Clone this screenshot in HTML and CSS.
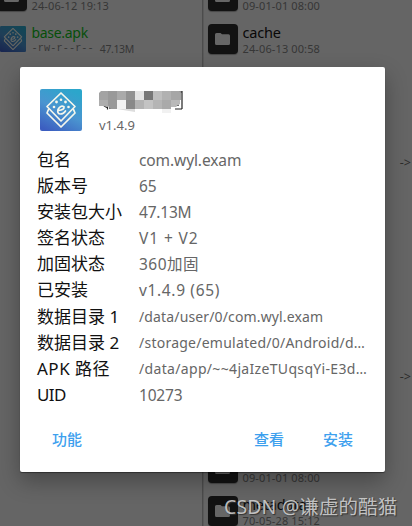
FILE: index.html
```html
<!DOCTYPE html>
<html lang="zh-CN">
<head>
    <meta charset="UTF-8">
    <meta name="viewport" content="width=device-width, initial-scale=1.0">
    <title>base.apk</title>
    <link rel="stylesheet" href="styles.css">
</head>
<body>
    <svg width="0" height="0" class="defs">
        <defs>
            <linearGradient id="app-bg" x1="0.7" y1="0" x2="0.2" y2="1">
                <stop offset="0" stop-color="#2ca6cb"/>
                <stop offset="0.5" stop-color="#4a95d0"/>
                <stop offset="1" stop-color="#3c5ec0"/>
            </linearGradient>
        </defs>
        <symbol id="folder" viewBox="0 0 30 30">
            <path d="M7 10.500Q7 9 8.500 9H12.500L14 10.300H20.500Q22 10.300 22 11.800V19.500Q22 21 20.500 21H8.500Q7 21 7 19.500Z" fill="#666"/>
        </symbol>
        <symbol id="app" viewBox="0 0 42 42">
            <rect width="42" height="42" rx="2" fill="url(#app-bg)"/>
            <g fill="none" stroke="#f6f7ec" stroke-width="1.700" stroke-linejoin="round" stroke-linecap="round">
                <path d="M21 4L35 17.500L21 32L7 17.500Z"/>
                <path d="M8.500 20.500L7 24L21 38L35 24L33.500 20.500"/>
                <path d="M18.500 21.500Q24.500 21 24 17.800Q20.500 15.800 18 20.500Q17 25 20.500 25Q23.500 25 25.500 22"/>
            </g>
            <g fill="#f6f7ec">
                <circle cx="14" cy="18" r="1.300"/>
                <circle cx="16.500" cy="13" r="1.400"/>
                <circle cx="21" cy="10.800" r="1.300"/>
                <circle cx="25.500" cy="13" r="1.400"/>
                <circle cx="28.500" cy="18" r="1.300"/>
            </g>
        </symbol>
    </svg>

    <div class="screen">
        <div class="pane pane-left">
            <div class="file">
                <div class="icon"><svg><use href="#folder"/></svg></div>
                <div class="info"><p class="name"></p><p class="meta">24-06-12 19:13</p></div>
            </div>
            <div class="file">
                <svg class="apk-icon"><use href="#app"/></svg>
                <div class="info"><p class="name apk">base.apk</p><p class="meta"><span class="perm">-rw-r--r--</span><span class="weight">47.13M</span></p></div>
            </div>
        </div>
        <div class="pane pane-right">
            <div class="file">
                <div class="icon"><svg><use href="#folder"/></svg></div>
                <div class="info"><p class="name"></p><p class="meta">09-01-01 08:00</p></div>
            </div>
            <div class="file">
                <div class="icon"><svg><use href="#folder"/></svg></div>
                <div class="info"><p class="name">cache</p><p class="meta">24-06-13 00:58</p></div>
            </div>
            <div class="file"></div>
            <div class="file"></div>
            <div class="file"><span class="link">-&gt;</span></div>
            <div class="file"></div>
            <div class="file"></div>
            <div class="file"></div>
            <div class="file"></div>
            <div class="file"><span class="link">-&gt;</span></div>
            <div class="file"></div>
            <div class="file">
                <div class="icon"><svg><use href="#folder"/></svg></div>
                <div class="info"><p class="name"></p><p class="meta">09-01-01 08:00</p></div>
            </div>
            <div class="file">
                <div class="icon"><svg><use href="#folder"/></svg></div>
                <div class="info"><p class="name">metadata</p><p class="meta">70-05-28 15:12</p></div>
            </div>
        </div>

        <div class="dialog">
            <div class="head">
                <svg class="app-icon"><use href="#app"/></svg>
                <div class="title">
                    <svg class="mosaic" width="84" height="23" viewBox="0 0 84 23">
                        <path d="M5 15L9 17M8.500 15V18.500M11 15V18M76 18H83M83 0V18M80 1H83M76 15L80 14" stroke="#222" stroke-width="1.200"/>
                        <path d="M18 18L36 21V18Z" fill="#ddd"/>
                        <path d="M0 2L2 0H9V9H0Z" fill="#a3a3a3"/>
                        <rect x="9" y="0" width="9" height="9" fill="#999"/>
                        <rect x="18" y="0" width="9" height="9" fill="#aaa"/>
                        <rect x="27" y="0" width="9" height="9" fill="#929292"/>
                        <rect x="36" y="0" width="9" height="9" fill="#e4e4e4"/>
                        <rect x="45" y="0" width="9" height="9" fill="#777"/>
                        <rect x="54" y="0" width="9" height="9" fill="#bebebe"/>
                        <rect x="63" y="0" width="9" height="9" fill="#b1b1b1"/>
                        <path d="M72 0H80L82 2V9H72Z" fill="#a6a6a6"/>
                        <path d="M0 9H9V16L4 15H0Z" fill="#adadad"/>
                        <path d="M9 9H18V18H12L9 15Z" fill="#999"/>
                        <rect x="18" y="9" width="9" height="9" fill="#f2f2f2"/>
                        <rect x="27" y="9" width="9" height="9" fill="#898989"/>
                        <rect x="36" y="9" width="9" height="9" fill="#b3b3b3"/>
                        <rect x="45" y="9" width="9" height="9" fill="#c3c3c3"/>
                        <rect x="54" y="9" width="9" height="9" fill="#b5b5b5"/>
                        <rect x="63" y="9" width="9" height="9" fill="#aaa"/>
                        <path d="M72 9H81V13L76 16H72Z" fill="#b9b9b9"/>
                        <rect x="63" y="18" width="9" height="4" fill="#f1f1f1"/>
                    </svg>
                    <p class="version">v1.4.9</p>
                </div>
            </div>
            <dl class="details">
                <dt>包名</dt><dd class="package">com.wyl.exam</dd>
                <dt>版本号</dt><dd>65</dd>
                <dt>安装包大小</dt><dd>47.13M</dd>
                <dt>签名状态</dt><dd class="sign">V1 + V2</dd>
                <dt>加固状态</dt><dd class="pack">360加固</dd>
                <dt>已安装</dt><dd class="installed">v1.4.9 (65)</dd>
                <dt>数据目录 1</dt><dd class="path user">/data/user/0/com.wyl.exam</dd>
                <dt>数据目录 2</dt><dd class="path">/storage/emulated/0/Android/d…</dd>
                <dt class="apk-path">APK 路径</dt><dd class="path app">/data/app/~~4jaIzeTUqsqYi-E3d…</dd>
                <dt class="uid">UID</dt><dd>10273</dd>
            </dl>
            <div class="actions">
                <button class="more">功能</button>
                <button>查看</button>
                <button>安装</button>
            </div>
        </div>

        <div class="watermark">CSDN @谦虚的酷猫</div>
    </div>
</body>
</html>
```
FILE: styles.css
```css
* {
    box-sizing: border-box;
}
body {
    margin: 0;
    font-family: "Noto Sans", "Noto Sans CJK SC", sans-serif;
    background: #656565;
}
p, dl, dd {
    margin: 0;
}
.defs {
    position: absolute;
}
.screen {
    position: relative;
    width: 412px;
    height: 526px;
    overflow: hidden;
    display: flex;
}
.pane {
    display: flex;
    flex-direction: column;
    height: 545px;
    margin-top: -19px;
}
.pane-left {
    width: 203px;
    border-right: 1px solid #4c4c4c;
}
.pane-right {
    width: 209px;
    padding-left: 4px;
    border-left: 1px solid #5a5a5a;
}
.file {
    display: flex;
    flex: none;
    height: 42.9px;
}
.icon {
    width: 30px;
    height: 30px;
    border-radius: 4px;
    background: #121212;
    box-shadow: 0 1px 1px rgba(0,0,0,0.3);
}
.pane-left .icon {
    margin-left: -3px;
}
.icon svg {
    display: block;
    width: 30px;
    height: 30px;
}
.apk-icon {
    width: 26px;
    height: 26px;
    margin: 2px 1px 0 0;
    filter: brightness(0.42);
}
.info {
    margin-left: 4.5px;
}
.name {
    height: 17px;
    font-size: 14.5px;
    line-height: 17px;
    letter-spacing: -0.2px;
    color: #080808;
    white-space: nowrap;
}
.apk {
    font-size: 14px;
    letter-spacing: -0.3px;
    color: #074f0a;
}
.meta {
    display: flex;
    gap: 6px;
    font-size: 11px;
    line-height: 16px;
    letter-spacing: 0.12px;
    color: #363636;
    white-space: nowrap;
}
.perm {
    font-family: "Liberation Mono", monospace;
    font-size: 10.2px;
}
.weight {
    font-size: 10.5px;
    letter-spacing: -0.4px;
}
.link {
    margin: 0 1px 0 auto;
    font-size: 12.5px;
    line-height: 19px;
    color: #2c2c2c;
}
.dialog {
    position: absolute;
    left: 20px;
    top: 67px;
    width: 365px;
    height: 405px;
    padding: 22px 17px 0;
    border-radius: 2px;
    background: #fff;
    box-shadow: 0 9px 22px rgba(0,0,0,0.3), 0 1px 1px rgba(0,0,0,0.4);
}
.head {
    display: flex;
    height: 58px;
    padding-left: 3px;
}
.app-icon {
    width: 42px;
    height: 42px;
}
.title {
    margin: 2px 0 0 17px;
}
.mosaic {
    display: block;
}
.version {
    margin-top: 2px;
    font-size: 13px;
    line-height: 18px;
    color: #666;
}
.details {
    display: grid;
    grid-template-columns: 102px 1fr;
    grid-auto-rows: 26.1px;
    line-height: 26px;
    white-space: nowrap;
}
dt {
    font-size: 17px;
    color: #111;
}
dd {
    font-size: 15.5px;
    letter-spacing: -0.2px;
    color: #666;
}
.package {
    letter-spacing: -0.1px;
}
.sign {
    letter-spacing: 0.9px;
}
.pack {
    letter-spacing: 0.5px;
}
.installed {
    letter-spacing: 0.65px;
}
.path {
    font-size: 14px;
    letter-spacing: 0.24px;
}
.user {
    letter-spacing: 0.14px;
}
.app {
    letter-spacing: 0.33px;
}
.apk-path {
    letter-spacing: 0.5px;
}
.uid {
    letter-spacing: -0.6px;
}
.actions {
    display: flex;
    margin-top: 18px;
    gap: 39px;
    padding: 0 15px;
}
button {
    padding: 0;
    border: none;
    background: none;
    font-family: inherit;
    font-size: 15px;
    font-weight: 500;
    line-height: 26px;
    color: #3da0ee;
}
.more {
    margin-right: auto;
}
.watermark {
    position: absolute;
    left: 224px;
    top: 494px;
    font-size: 19.5px;
    line-height: 26px;
    letter-spacing: 0.1px;
    color: rgba(215,215,215,0.85);
    text-shadow: 1px 1px 1px #333;
    white-space: nowrap;
}
```
